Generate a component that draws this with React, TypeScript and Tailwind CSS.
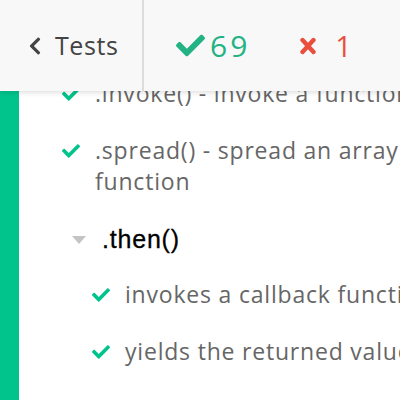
import { FaCheck, FaChevronLeft } from "react-icons/fa";

const green = "text-[#00c48c]";

// thick cross for failed count
const Cross = () => (
  <svg viewBox="0 0 16 18" className="w-[16px] h-[18px] text-[#e94f3c]">
    <path d="M2.5 3 L13.5 15 M13.5 3 L2.5 15" stroke="currentColor" strokeWidth="4.4" strokeLinecap="round" />
  </svg>
);

// single test row with check mark
const TestRow = ({ text, indent }: { text: React.ReactNode; indent: string }) => (
  <li className={`flex items-start ${indent}`}>
    <FaCheck className={`w-[18px] h-[18px] mt-[7px] shrink-0 ${green}`} />
    <span className="ml-[15px] text-[23px] leading-[31px] tracking-[0.8px] text-[#666] whitespace-nowrap">{text}</span>
  </li>
);

export default function App() {
  return (
    <div className="w-[400px] h-[400px] overflow-hidden bg-white flex flex-col font-['Open_Sans',sans-serif]">
      {/* Header */}
      <header className="h-[91px] shrink-0 bg-[#f8f8f8] flex relative z-10 shadow-[0_2px_5px_rgba(0,0,0,0.12)]">
        <div className="w-[144px] border-r-2 border-[#dcdcdc] flex items-center pl-[27px] gap-[12px] text-[#444]">
          <FaChevronLeft className="w-[16px] h-[20px]" />
          <span className="text-[25px] tracking-[0.6px]">Tests</span>
        </div>
        <div className="flex items-center pl-[32px]">
          <FaCheck className="w-[29px] h-[29px] text-[#23b283]" />
          <span className="ml-[5px] text-[30px] tracking-[3px] text-[#23b283]">69</span>
          <span className="ml-[50px] flex">
            <Cross />
          </span>
          <span className="ml-[19px] text-[29px] text-[#e94f3c]">1</span>
        </div>
      </header>

      <div className="flex flex-1 min-h-0">
        <div className="w-[19px] bg-[#00c48c]" />
        <div className="flex-1 overflow-hidden">
          <ul className="-mt-[13px] flex flex-col">
            <TestRow indent="pl-[43px]" text=".invoke() - invoke a function" />
            <li className="flex items-start pl-[43px] mt-[26px]">
              <FaCheck className={`w-[18px] h-[18px] mt-[7px] shrink-0 ${green}`} />
              <span className="ml-[15px] text-[23px] leading-[31px] tracking-[0.8px] text-[#666]">
                <span className="whitespace-nowrap">.spread() - spread an array</span>
                <br />
                function
              </span>
            </li>
            <li className="flex items-center pl-[53px] mt-[27px]">
              <span className="w-0 h-0 border-l-[7px] border-r-[7px] border-t-[8px] border-l-transparent border-r-transparent border-t-[#c4c4c4]" />
              <span className="ml-[16px] text-[25px] leading-[31px] tracking-[0.8px] text-black font-['Liberation_Sans',sans-serif] [-webkit-text-stroke:0.3px_black]">
                .then()
              </span>
            </li>
            <li className="mt-[24px]">
              <TestRow indent="pl-[73px]" text="invokes a callback function" />
            </li>
            <li className="mt-[26px]">
              <TestRow indent="pl-[73px]" text="yields the returned value" />
            </li>
          </ul>
        </div>
      </div>
    </div>
  );
}
